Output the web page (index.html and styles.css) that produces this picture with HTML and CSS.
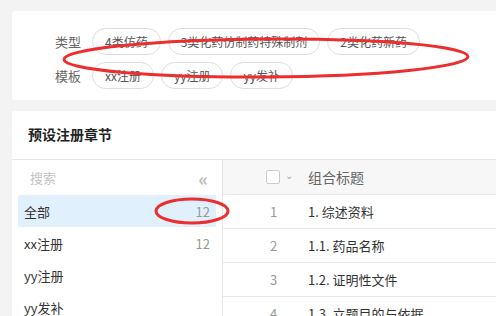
FILE: index.html
```html
<!DOCTYPE html>
<html lang="zh">
<head>
<meta charset="UTF-8">
<title>预设注册章节</title>
<link rel="stylesheet" href="styles.css">
</head>
<body>

<div class="filter-card">
  <div class="filter-row">
    <span class="filter-label">类型</span>
    <span class="tag">4类仿药</span>
    <span class="tag">3类化药仿制药特殊制剂</span>
    <span class="tag">2类化药新药</span>
  </div>
  <div class="filter-row">
    <span class="filter-label">模板</span>
    <span class="tag">xx注册</span>
    <span class="tag">yy注册</span>
    <span class="tag">yy发补</span>
  </div>
</div>

<div class="main-card">
  <div class="card-title">预设注册章节</div>
  <div class="card-body">
    <div class="side">
      <div class="search">
        <span class="search-text">搜索</span>
        <span class="collapse">«</span>
      </div>
      <div class="side-item active"><span>全部</span><span class="count">12</span></div>
      <div class="side-item"><span>xx注册</span><span class="count">12</span></div>
      <div class="side-item"><span>yy注册</span></div>
      <div class="side-item"><span>yy发补</span></div>
    </div>
    <div class="table">
      <div class="row head">
        <div class="col-idx"><span class="checkbox"></span><span class="caret">⌄</span></div>
        <div class="col-title">组合标题</div>
      </div>
      <div class="row"><div class="col-idx num">1</div><div class="col-title">1. 综述资料</div></div>
      <div class="row"><div class="col-idx num">2</div><div class="col-title">1.1. 药品名称</div></div>
      <div class="row"><div class="col-idx num">3</div><div class="col-title">1.2. 证明性文件</div></div>
      <div class="row"><div class="col-idx num">4</div><div class="col-title">1.3. 立题目的与依据</div></div>
    </div>
  </div>
</div>

<!-- hand-drawn marks on top of the screenshot -->
<svg class="marks" width="496" height="316" viewBox="0 0 496 316">
  <ellipse cx="266" cy="58" rx="202" ry="19" transform="rotate(-0.4 266 58)" />
  <ellipse cx="192" cy="211" rx="36" ry="12" />
</svg>

</body>
</html>
```

FILE: styles.css
```css
body {
  margin: 0;
  background: #f3f3f3;
  font-family: "Noto Sans CJK SC", "Noto Sans", sans-serif;
  font-size: 13px;
  color: #333;
  width: 496px;
  height: 316px;
  overflow: hidden;
  position: relative;
}
.filter-card {
  margin: 11px 0 0 12px;
  background: #fff;
  border-radius: 3px 0 0 3px;
  padding: 17px 0 11px 43px;
  display: flex;
  flex-direction: column;
  gap: 7px;
}
.filter-row {
  display: flex;
  align-items: center;
  gap: 7px;
}
.filter-label {
  color: #666;
  width: 30px;
}
.tag {
  height: 25px;
  line-height: 25px;
  padding: 0 12px;
  border: 1px solid #ddd;
  border-radius: 14px;
  font-size: 12px;
  color: #555;
}
.main-card {
  margin: 11px 0 0 12px;
  background: #fff;
  border-radius: 3px 0 0 0;
}
.card-title {
  height: 48px;
  line-height: 46px;
  padding-left: 16px;
  font-size: 14px;
  font-weight: bold;
  color: #222;
  border-bottom: 1px solid #e6e6e6;
}
.card-body {
  display: flex;
}
.side {
  width: 211px;
  border-right: 1px solid #e6e6e6;
  padding: 0 6px;
  box-sizing: border-box;
  height: 200px;
}
.search {
  height: 35px;
  display: flex;
  align-items: center;
  justify-content: space-between;
  padding: 0 8px 0 12px;
}
.search-text {
  color: #c4c4c4;
}
.collapse {
  color: #bbb;
  font-size: 18px;
  font-weight: bold;
  line-height: 1;
}
.side-item {
  height: 32px;
  display: flex;
  align-items: center;
  justify-content: space-between;
  padding: 0 6px;
  border-radius: 2px;
}
.side-item.active {
  background: #e1f0fd;
}
.count {
  color: #999;
}
.table {
  flex: 1;
}
.row {
  height: 33px;
  display: flex;
  align-items: center;
  border-bottom: 1px solid #e8e8e8;
}
.row.head {
  height: 34px;
  background: #f7f7f7;
  color: #666;
  font-size: 14px;
}
.col-idx {
  width: 85px;
  box-sizing: border-box;
  display: flex;
  align-items: center;
  padding-left: 43px;
  gap: 5px;
}
.num {
  color: #999;
  padding-left: 47px;
}
.checkbox {
  width: 12px;
  height: 12px;
  border: 1px solid #ccc;
  border-radius: 2px;
  background: #fff;
}
.caret {
  color: #aaa;
  font-size: 10px;
  line-height: 1;
  margin-top: -4px;
}
.col-title {
  flex: 1;
}
.marks {
  position: absolute;
  left: 0;
  top: 0;
  pointer-events: none;
}
.marks ellipse {
  fill: none;
  stroke: #ee2e2e;
  stroke-width: 3;
}
```
